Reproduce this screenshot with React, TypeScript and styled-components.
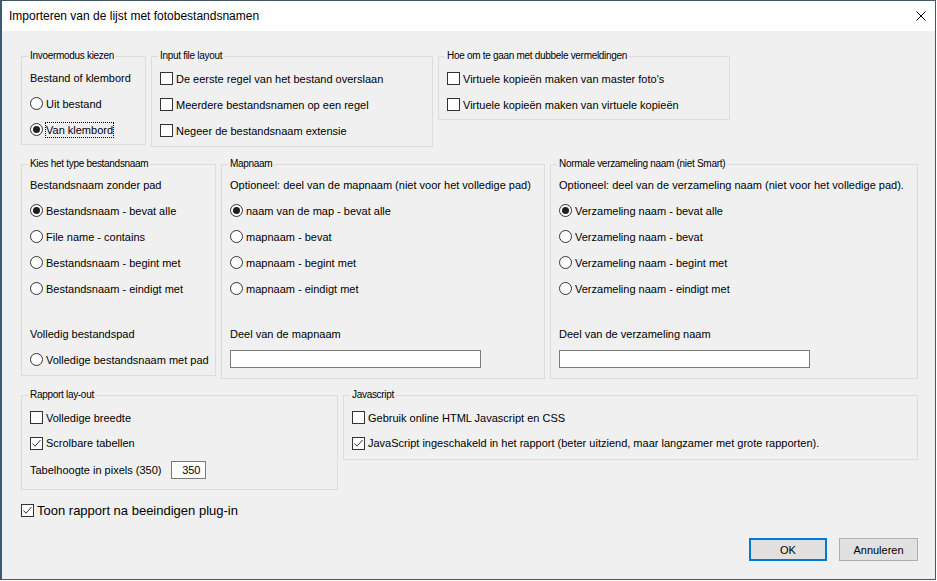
import React from 'react';
import styled, { createGlobalStyle } from 'styled-components';

const GlobalStyle = createGlobalStyle`
  html, body {
    margin: 0;
    padding: 0;
    background: #ffffff;
  }
  body {
    font-family: "Liberation Sans", Arial, sans-serif;
    font-size: 11px;
    color: #000;
  }
  * {
    box-sizing: border-box;
  }
`;

const Window = styled.div`
  width: 936px;
  height: 580px;
  border: 1px solid #41576b;
  border-left-width: 2px;
  background: #f0f0f0;
  display: flex;
  flex-direction: column;
`;

const TitleBar = styled.div`
  height: 30px;
  background: #ffffff;
  display: flex;
  align-items: center;
  justify-content: space-between;
  padding: 0 9px 1px 7px;
  font-size: 12px;
  flex-shrink: 0;
`;

const CloseIcon = styled.svg`
  width: 10px;
  height: 10px;
  margin-top: 1px;
`;

const Body = styled.div`
  padding: 19px 0 0 19px;
  display: flex;
  flex-direction: column;
`;

const GroupRow = styled.div<{ $mb?: number }>`
  display: flex;
  align-items: flex-start;
  gap: 5px;
  margin-bottom: ${(p) => p.$mb ?? 0}px;
`;

const Group = styled.fieldset<{ $w: number; $pt?: number; $pb?: number }>`
  width: ${(p) => p.$w}px;
  min-width: 0;
  margin: 0;
  border: 1px solid #dcdcdc;
  padding: ${(p) => p.$pt ?? 3}px 8px ${(p) => p.$pb ?? 3}px 8px;
  display: flex;
  flex-direction: column;
`;

const Legend = styled.legend`
  font-size: 10px;
  letter-spacing: -0.3px;
  line-height: 12px;
  padding: 0 2px;
  margin-left: -2px;
`;

const Row = styled.div<{ $h?: number }>`
  height: ${(p) => p.$h ?? 26}px;
  display: flex;
  align-items: center;
  gap: 3px;
  padding-top: 1px;
  white-space: nowrap;
`;

const Spacer = styled.div<{ $h: number }>`
  height: ${(p) => p.$h}px;
`;

const Box = styled.span`
  width: 13px;
  height: 13px;
  border: 1px solid #333333;
  background: #ffffff;
  display: inline-flex;
  align-items: center;
  justify-content: center;
  flex-shrink: 0;
`;

const Circle = styled.span`
  width: 13px;
  height: 13px;
  border: 1px solid #333333;
  border-radius: 50%;
  background: #ffffff;
  display: inline-flex;
  align-items: center;
  justify-content: center;
  flex-shrink: 0;
`;

const Dot = styled.span`
  width: 7px;
  height: 7px;
  border-radius: 50%;
  background: #1f1f1f;
`;

const Label = styled.span<{ $focus?: boolean }>`
  padding: 1px 0;
  outline: ${(p) => (p.$focus ? '1px dotted #000' : 'none')};
  outline-offset: 0;
`;

const TextInput = styled.div<{ $w: number; $align?: string }>`
  width: ${(p) => p.$w}px;
  height: 18px;
  border: 1px solid #7a7a7a;
  background: #ffffff;
  display: flex;
  align-items: center;
  justify-content: ${(p) => p.$align ?? 'flex-start'};
  padding: 0 5px;
  flex-shrink: 0;
`;

const InputRow = styled.div<{ $mt?: number }>`
  margin-top: ${(p) => p.$mt ?? 0}px;
  display: flex;
`;

const BigRow = styled.div`
  margin-top: 10px;
  height: 20px;
  display: flex;
  align-items: center;
  gap: 3px;
  font-size: 13px;
`;

const ButtonBar = styled.div`
  width: 897px;
  margin-top: 18px;
  display: flex;
  justify-content: flex-end;
  gap: 12px;
`;

const Button = styled.button<{ $primary?: boolean }>`
  width: ${(p) => (p.$primary ? 78 : 79)}px;
  height: 23px;
  font-family: "Liberation Sans", Arial, sans-serif;
  font-size: 11px;
  color: #000;
  background: #e1e1e1;
  border: ${(p) => (p.$primary ? '2px solid #0078d7' : '1px solid #adadad')};
  padding: 0;
  cursor: default;
`;

const Check = ({ checked }: { checked?: boolean }) => (
  <Box>
    {checked && (
      <svg width="11" height="11" viewBox="0 0 11 11">
        <polyline points="1.5,5.5 4,8.2 9.5,2" fill="none" stroke="#333" strokeWidth="1" />
      </svg>
    )}
  </Box>
);

const Radio = ({ checked }: { checked?: boolean }) => <Circle>{checked && <Dot />}</Circle>;

const CheckRow = ({ label, checked, h }: { label: string; checked?: boolean; h?: number }) => (
  <Row $h={h}>
    <Check checked={checked} />
    <Label>{label}</Label>
  </Row>
);

const RadioRow = ({ label, checked, focus, h }: { label: string; checked?: boolean; focus?: boolean; h?: number }) => (
  <Row $h={h}>
    <Radio checked={checked} />
    <Label $focus={focus}>{label}</Label>
  </Row>
);

const App: React.FC = () => {
  return (
    <>
      <GlobalStyle />
      <Window>
        <TitleBar>
          <span>Importeren van de lijst met fotobestandsnamen</span>
          <CloseIcon viewBox="0 0 10 10">
            <path d="M0.5 0.5 L9.5 9.5 M9.5 0.5 L0.5 9.5" stroke="#000" strokeWidth="1" fill="none" />
          </CloseIcon>
        </TitleBar>
        <Body>
          <GroupRow $mb={11}>
            <Group $w={125} $pb={2}>
              <Legend>Invoermodus kiezen</Legend>
              <Row $h={25}>Bestand of klembord</Row>
              <RadioRow label="Uit bestand" />
              <RadioRow label="Van klembord" checked focus />
            </Group>
            <Group $w={282} $pb={3}>
              <Legend>Input file layout</Legend>
              <CheckRow label="De eerste regel van het bestand overslaan" />
              <CheckRow label="Meerdere bestandsnamen op een regel" />
              <CheckRow label="Negeer de bestandsnaam extensie" />
            </Group>
            <Group $w={292} $pb={2}>
              <Legend>Hoe om te gaan met dubbele vermeldingen</Legend>
              <CheckRow label="Virtuele kopieën maken van master foto's" />
              <CheckRow label="Virtuele kopieën maken van virtuele kopieën" />
            </Group>
          </GroupRow>

          <GroupRow $mb={10}>
            <Group $w={195} $pt={2} $pb={3}>
              <Legend>Kies het type bestandsnaam</Legend>
              <Row $h={25}>Bestandsnaam zonder pad</Row>
              <RadioRow label="Bestandsnaam - bevat alle" checked />
              <RadioRow label="File name - contains" />
              <RadioRow label="Bestandsnaam - begint met" />
              <RadioRow label="Bestandsnaam - eindigt met" />
              <Spacer $h={19} />
              <Row>Volledig bestandspad</Row>
              <RadioRow label="Volledige bestandsnaam met pad" />
            </Group>
            <Group $w={324} $pt={2} $pb={10}>
              <Legend>Mapnaam</Legend>
              <Row $h={25}>Optioneel: deel van de mapnaam (niet voor het volledige pad)</Row>
              <RadioRow label="naam van de map - bevat alle" checked />
              <RadioRow label="mapnaam - bevat" />
              <RadioRow label="mapnaam - begint met" />
              <RadioRow label="mapnaam - eindigt met" />
              <Spacer $h={19} />
              <Row>Deel van de mapnaam</Row>
              <InputRow $mt={4}>
                <TextInput $w={251} />
              </InputRow>
            </Group>
            <Group $w={368} $pt={2} $pb={10}>
              <Legend>Normale verzameling naam (niet Smart)</Legend>
              <Row $h={25}>Optioneel: deel van de verzameling naam (niet voor het volledige pad).</Row>
              <RadioRow label="Verzameling naam - bevat alle" checked />
              <RadioRow label="Verzameling naam - bevat" />
              <RadioRow label="Verzameling naam - begint met" />
              <RadioRow label="Verzameling naam - eindigt met" />
              <Spacer $h={19} />
              <Row>Deel van de verzameling naam</Row>
              <InputRow $mt={4}>
                <TextInput $w={251} />
              </InputRow>
            </Group>
          </GroupRow>

          <GroupRow>
            <Group $w={317} $pb={5}>
              <Legend>Rapport lay-out</Legend>
              <CheckRow label="Volledige breedte" />
              <CheckRow label="Scrolbare tabellen" checked h={25} />
              <Row $h={29} style={{ gap: 10 }}>
                <span>Tabelhoogte in pixels (350)</span>
                <TextInput $w={35} $align="flex-end">350</TextInput>
              </Row>
            </Group>
            <Group $w={575} $pb={4}>
              <Legend>Javascript</Legend>
              <CheckRow label="Gebruik online HTML Javascript en CSS" />
              <CheckRow label="JavaScript ingeschakeld in het rapport (beter uitziend, maar langzamer met grote rapporten)." checked h={25} />
            </Group>
          </GroupRow>

          <BigRow>
            <Check checked />
            <span>Toon rapport na beeindigen plug-in</span>
          </BigRow>

          <ButtonBar>
            <Button $primary>OK</Button>
            <Button>Annuleren</Button>
          </ButtonBar>
        </Body>
      </Window>
    </>
  );
};

export default App;
